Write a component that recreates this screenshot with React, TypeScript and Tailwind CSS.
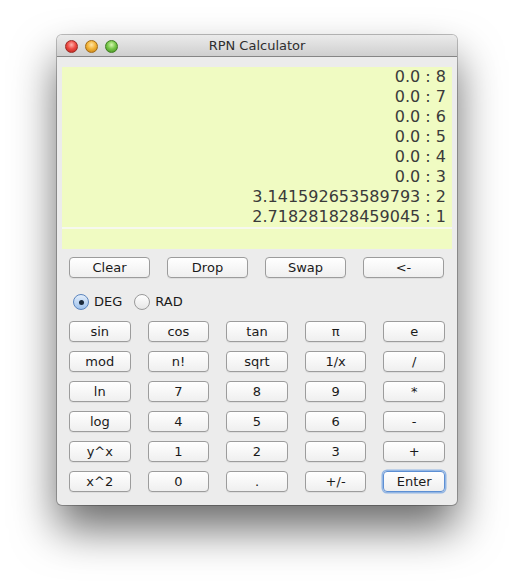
import React from 'react';

const stack = [
	'0.0 : 8',
	'0.0 : 7',
	'0.0 : 6',
	'0.0 : 5',
	'0.0 : 4',
	'0.0 : 3',
	'3.141592653589793 : 2',
	'2.718281828459045 : 1',
];

const topKeys = ['Clear', 'Drop', 'Swap', '<-'];

const keys = [
	'sin', 'cos', 'tan', 'π', 'e',
	'mod', 'n!', 'sqrt', '1/x', '/',
	'ln', '7', '8', '9', '*',
	'log', '4', '5', '6', '-',
	'y^x', '1', '2', '3', '+',
	'x^2', '0', '.', '+/-', 'Enter',
];

const Key = ({label, focused = false, className = ''}: { label: string; focused?: boolean; className?: string }) => (
	<button
		className={
			'h-[21px] rounded-[4px] border text-[13px] leading-none text-[#1a1a1a] bg-gradient-to-b from-white to-[#efefef] flex items-center justify-center ' +
			(focused
				? 'border-[#5d8fd3] shadow-[0_0_0_1.5px_rgba(110,160,225,0.7)]'
				: 'border-[#9c9c9c] shadow-[0_1px_0_rgba(0,0,0,0.06)]') +
			' ' + className
		}
	>
		{label}
	</button>
);

const Light = ({color}: { color: 'red' | 'yellow' | 'green' }) => {
	const cls = {
		red: 'bg-[radial-gradient(circle_at_50%_35%,#ffb3ad_0%,#ee4c45_45%,#b51d16_100%)] border-[#9a2a24]',
		yellow: 'bg-[radial-gradient(circle_at_50%_35%,#ffe6a8_0%,#f3b53a_45%,#c07a10_100%)] border-[#a36c16]',
		green: 'bg-[radial-gradient(circle_at_50%_35%,#d6f7b0_0%,#78c84a_45%,#3f8a1c_100%)] border-[#3f7d22]',
	}[color];
	return <span className={'w-[13px] h-[13px] rounded-full border ' + cls}/>;
};

export default function App() {
	return (
		<div className="w-[514px] h-[584px] bg-white pt-[35px] pl-[57px] font-['DejaVu_Sans',sans-serif]">
			<div className="w-[400px] h-[470px] rounded-[5px] bg-[#ececec] shadow-[0_0_0_1px_rgba(0,0,0,0.25),0_24px_44px_rgba(0,0,0,0.58)] overflow-hidden">
				{/* title bar */}
				<div className="relative h-[22px] bg-gradient-to-b from-[#ebebeb] to-[#cfcfcf] border-b border-[#858585] flex items-center">
					<div className="flex gap-[7px] pl-[8px] pt-[1px]">
						<Light color="red"/>
						<Light color="yellow"/>
						<Light color="green"/>
					</div>
					<div className="absolute inset-0 flex items-center justify-center text-[13px] text-[#2e2e2e] pt-[1px]">
						RPN Calculator
					</div>
				</div>

				{/* display */}
				<div className="px-[5px] pt-[10px]">
					<div className="bg-[#f0fbc2]">
						<div className="pr-[6px] text-right text-[16px] leading-[20px] text-[#3a3a3a] h-[160px]">
							{stack.map((line, i) => (
								<div key={i}>{line}</div>
							))}
						</div>
					</div>
					<div className="h-[2px] bg-[#f6f8ee]"/>
					<div className="h-[20px] bg-[#f0fbc2]"/>
				</div>

				{/* stack ops */}
				<div className="mt-[8px] pl-[12px] flex gap-[17px]">
					{topKeys.map(k => (
						<Key key={k} label={k} className="w-[81px]"/>
					))}
				</div>

				{/* angle mode */}
				<div className="mt-[15px] pl-[16px] flex items-center h-[18px] text-[13px] text-[#1a1a1a]">
					<span className="w-[16px] h-[16px] rounded-full border border-[#5a84bd] bg-gradient-to-b from-[#e3eefb] to-[#9fc2ec] flex items-center justify-center">
						<span className="w-[5px] h-[5px] rounded-full bg-[#1c2a3a]"/>
					</span>
					<span className="ml-[5px]">DEG</span>
					<span className="ml-[12px] w-[16px] h-[16px] rounded-full border border-[#9a9a9a] bg-gradient-to-b from-white to-[#e6e6e6]"/>
					<span className="ml-[5px]">RAD</span>
				</div>

				{/* keypad */}
				<div className="mt-[10px] pl-[12px] w-[388px] grid grid-cols-5 gap-x-[17px] gap-y-[9px]">
					{keys.map(k => (
						<Key key={k} label={k} focused={k === 'Enter'}/>
					))}
				</div>
			</div>
		</div>
	);
}
